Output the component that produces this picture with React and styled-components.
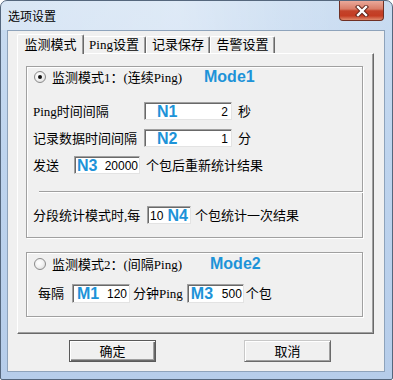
import React from 'react';
import styled, { createGlobalStyle } from 'styled-components';

const GlobalStyle = createGlobalStyle`
  body {
    margin: 0;
    background: #fff;
    font-family: "Liberation Serif", "Noto Sans CJK SC", serif;
    font-size: 13px;
  }
`;

const Window = styled.div`
  width: 393px;
  height: 380px;
  box-sizing: border-box;
  border: 1px solid #55677d;
  border-radius: 7px 7px 2px 2px;
  background: linear-gradient(180deg, #c9dcf1 0%, #bed4ee 40%, #b6cdea 100%);
  display: flex;
  flex-direction: column;
  overflow: hidden;
`;

const TitleBar = styled.div`
  height: 29px;
  display: flex;
  align-items: flex-start;
  padding-left: 7px;
  background: linear-gradient(
    90deg,
    rgba(255, 255, 255, 0.3) 0%,
    rgba(255, 255, 255, 0.4) 45%,
    rgba(255, 255, 255, 0.15) 75%,
    rgba(255, 255, 255, 0) 100%
  );
`;

const Title = styled.span`
  margin-top: 7px;
  font-family: "Noto Sans CJK SC", sans-serif;
  font-size: 12px;
  line-height: 16px;
  color: #000;
`;

const CloseButton = styled.div`
  margin-left: auto;
  margin-right: 8px;
  width: 45px;
  height: 20px;
  box-sizing: border-box;
  border: 1px solid #6f3024;
  border-top: none;
  border-radius: 0 0 4px 4px;
  background: linear-gradient(
    180deg,
    #eaa99a 0%,
    #d97d68 42%,
    #c3432a 52%,
    #c43c22 78%,
    #df8a6c 100%
  );
  display: flex;
  align-items: center;
  justify-content: center;
`;

const Client = styled.div`
  flex: 1;
  margin: 0 7px 7px 6px;
  border: 1px solid #8ea3bb;
  background: #f0f0f0;
  display: flex;
  flex-direction: column;
  padding: 2px 0 0 9px;
`;

const TabControl = styled.div`
  width: 357px;
  display: flex;
  flex-direction: column;
`;

const TabStrip = styled.div`
  height: 20px;
  display: flex;
  align-items: flex-end;
  padding-left: 2px;
`;

const Tab = styled.div`
  position: relative;
  z-index: ${(p) => (p.$active ? 2 : 1)};
  height: ${(p) => (p.$active ? 20 : 17)}px;
  width: ${(p) => p.$w}px;
  margin: ${(p) => (p.$active ? '0 -2px -1px -2px' : '0')};
  box-sizing: border-box;
  background: #f0f0f0;
  border-left: 1px solid #fff;
  border-top: 1px solid #fff;
  border-right: 1px solid #696969;
  box-shadow: inset -1px 0 0 #a0a0a0;
  border-radius: 2px 2px 0 0;
  display: flex;
  justify-content: center;
  padding-top: ${(p) => (p.$active ? 2 : 0)}px;
  line-height: 15px;
  white-space: nowrap;
`;

const Panel = styled.div`
  height: 281px;
  box-sizing: border-box;
  border-top: 1px solid #fff;
  border-left: 1px solid #fff;
  border-right: 1px solid #696969;
  border-bottom: 1px solid #696969;
  box-shadow: inset -1px -1px 0 #a0a0a0;
  padding: 12px 0 0 8px;
  display: flex;
  flex-direction: column;
  gap: 14px;
`;

const Group = styled.div`
  width: 337px;
  height: ${(p) => p.$h}px;
  box-sizing: border-box;
  border: 1px solid #a0a0a0;
  box-shadow: inset 1px 1px 0 #fff, 1px 1px 0 #fff;
  display: flex;
  flex-direction: column;
  padding-left: ${(p) => p.$pl}px;
`;

const Row = styled.div`
  display: flex;
  align-items: center;
  height: ${(p) => p.$h || 18}px;
  margin-top: ${(p) => p.$mt || 0}px;
  gap: ${(p) => p.$gap || 0}px;
  white-space: nowrap;
  line-height: 15px;
`;

const Radio = styled.span`
  width: 12px;
  height: 12px;
  box-sizing: border-box;
  border-radius: 50%;
  border: 1px solid #8a8a8a;
  background: radial-gradient(circle at 40% 40%, #ffffff 0%, #f2f2f2 45%, #d4d4d4 100%);
  display: flex;
  align-items: center;
  justify-content: center;
  margin: 0 6px 0 1px;

  &::after {
    content: '';
    width: 4px;
    height: 4px;
    border-radius: 50%;
    background: ${(p) => (p.$checked ? '#111' : 'transparent')};
  }
`;

const Label = styled.span`
  width: ${(p) => (p.$w ? `${p.$w}px` : 'auto')};
  margin-left: ${(p) => p.$ml || 0}px;
  margin-right: ${(p) => p.$mr || 0}px;
  flex: none;
`;

const Annot = styled.span`
  font-family: "Liberation Sans", Arial, sans-serif;
  font-weight: bold;
  font-size: 16px;
  line-height: 16px;
  color: #1d93d8;
  margin-left: ${(p) => p.$ml || 0}px;
`;

const Field = styled.div`
  width: ${(p) => p.$w}px;
  height: ${(p) => p.$h || 18}px;
  box-sizing: border-box;
  background: #fff;
  border: 1px solid;
  border-color: #a0a0a0 #e3e3e3 #e3e3e3 #a0a0a0;
  box-shadow: inset 1px 1px 0 #696969;
  display: flex;
  align-items: center;
  justify-content: space-between;
  padding: 1px ${(p) => p.$pr || 2}px 0 ${(p) => p.$pl || 2}px;
  flex: none;
`;

const Value = styled.span`
  font-family: "Liberation Sans", sans-serif;
  font-size: 12px;
  line-height: 14px;
`;

const Separator = styled.div`
  width: 324px;
  height: 0;
  margin: 17px 0 0 6px;
  border-top: 1px solid #a0a0a0;
  border-bottom: 1px solid #fff;
`;

const ButtonRow = styled.div`
  display: flex;
  gap: 88px;
  padding: 6px 0 0 52px;
`;

const Button = styled.div`
  width: 87px;
  height: 22px;
  box-sizing: border-box;
  background: #f0f0f0;
  border: 1px solid;
  border-color: ${(p) => (p.$default ? '#5a5a5a' : '#c8c8c8 #6a6a6a #6a6a6a #c8c8c8')};
  box-shadow: ${(p) =>
    p.$default
      ? 'inset 1px 1px 0 #fff, inset -1px -1px 0 #6a6a6a, inset -2px -2px 0 #a0a0a0'
      : 'inset 1px 1px 0 #fff, inset -1px -1px 0 #a0a0a0'};
  display: flex;
  align-items: center;
  justify-content: center;
  line-height: 15px;
`;

function CloseX() {
  return (
    <svg width="14" height="12" viewBox="0 0 14 12">
      <path d="M3 2 L11 10 M11 2 L3 10" stroke="#5a2016" strokeWidth="4.2" strokeLinecap="square" />
      <path d="M3 2 L11 10 M11 2 L3 10" stroke="#fff" strokeWidth="2.4" strokeLinecap="square" />
    </svg>
  );
}

export default function App() {
  return (
    <>
      <GlobalStyle />
      <Window>
        <TitleBar>
          <Title>选项设置</Title>
          <CloseButton>
            <CloseX />
          </CloseButton>
        </TitleBar>
        <Client>
          <TabControl>
            <TabStrip>
              <Tab $active $w={67}>监测模式</Tab>
              <Tab $w={64}>Ping设置</Tab>
              <Tab $w={64}>记录保存</Tab>
              <Tab $w={65}>告警设置</Tab>
            </TabStrip>
            <Panel>
              <Group $h={172} $pl={6}>
                <Row $h={20}>
                  <Radio $checked />
                  <Label $w={138}>监测模式1：(连续Ping)</Label>
                  <Annot $ml={14}>Mode1</Annot>
                </Row>
                <Row $mt={15}>
                  <Label $w={111}>Ping时间间隔</Label>
                  <Field $w={88} $pl={12} $pr={3}>
                    <Annot>N1</Annot>
                    <Value>2</Value>
                  </Field>
                  <Label $ml={6}>秒</Label>
                </Row>
                <Row $mt={9}>
                  <Label $w={111}>记录数据时间间隔</Label>
                  <Field $w={88} $pl={12} $pr={3}>
                    <Annot>N2</Annot>
                    <Value>1</Value>
                  </Field>
                  <Label $ml={6}>分</Label>
                </Row>
                <Row $mt={9}>
                  <Label $w={41}>发送</Label>
                  <Field $w={66} $pl={2} $pr={1}>
                    <Annot>N3</Annot>
                    <Value>20000</Value>
                  </Field>
                  <Label $ml={6}>个包后重新统计结果</Label>
                </Row>
                <Separator />
                <Row $mt={13}>
                  <Label $w={114}>分段统计模式时,每</Label>
                  <Field $w={44} $pl={2} $pr={0}>
                    <Value>10</Value>
                    <Annot>N4</Annot>
                  </Field>
                  <Label $ml={4}>个包统计一次结果</Label>
                </Row>
              </Group>
              <Group $h={65} $pl={6}>
                <Row $h={22}>
                  <Radio />
                  <Label $w={137}>监测模式2：(间隔Ping)</Label>
                  <Annot $ml={21}>Mode2</Annot>
                </Row>
                <Row $h={19} $mt={9}>
                  <Label $ml={5} $mr={8}>每隔</Label>
                  <Field $w={58} $h={19} $pl={4} $pr={2}>
                    <Annot>M1</Annot>
                    <Value>120</Value>
                  </Field>
                  <Label $ml={3} $mr={4}>分钟Ping</Label>
                  <Field $w={57} $h={19} $pl={3} $pr={1}>
                    <Annot>M3</Annot>
                    <Value>500</Value>
                  </Field>
                  <Label $ml={2}>个包</Label>
                </Row>
              </Group>
            </Panel>
          </TabControl>
          <ButtonRow>
            <Button $default>确定</Button>
            <Button>取消</Button>
          </ButtonRow>
        </Client>
      </Window>
    </>
  );
}
